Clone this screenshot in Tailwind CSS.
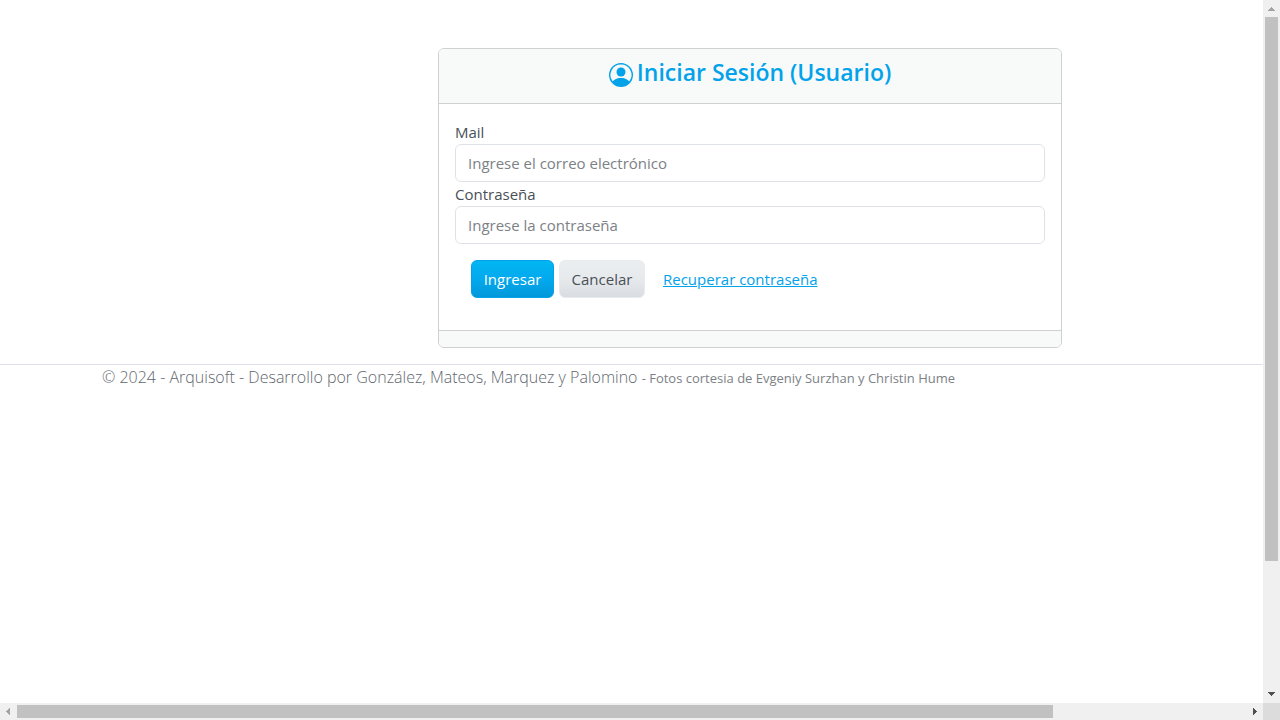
<!DOCTYPE html>
<html lang="es">
<head>
<meta charset="utf-8">
<meta name="viewport" content="width=device-width, initial-scale=1">
<title>Iniciar Sesión</title>
<script src="https://cdn.jsdelivr.net/npm/@tailwindcss/browser@4"></script>
</head>
<body class="grid h-screen grid-cols-[minmax(0,1fr)_17px] grid-rows-[minmax(0,1fr)_17px] overflow-hidden bg-white font-['Open_Sans','Noto_Sans',sans-serif] text-[15px] leading-6 text-[#495057]">
  <div class="overflow-hidden">
    <div class="w-[calc(100%+237px)] pt-12">
      <main class="mx-auto max-w-[624px] overflow-hidden rounded-md border border-[#cfd1d1]">
        <header class="flex h-[55px] items-start justify-center gap-1 border-b border-[#cfd1d1] bg-[#f8fafa] pt-2 text-[#03a2e9]">
          <svg class="mt-[6px] size-6" viewBox="0 0 16 16" fill="currentColor" aria-hidden="true">
            <path d="M11 6a3 3 0 1 1-6 0 3 3 0 0 1 6 0"/>
            <path fill-rule="evenodd" d="M0 8a8 8 0 1 1 16 0A8 8 0 0 1 0 8m8-7a7 7 0 0 0-5.468 11.37C3.242 11.226 4.805 10 8 10s4.757 1.225 5.468 2.37A7 7 0 0 0 8 1"/>
          </svg>
          <h1 class="text-[23px] leading-[30px] font-semibold">Iniciar Sesión (Usuario)</h1>
        </header>
        <form class="px-4 pt-4 pb-8" onsubmit="return false">
          <label for="mail" class="block">Mail</label>
          <input id="mail" type="email" placeholder="Ingrese el correo electrónico" class="block h-[38px] w-full rounded-md border border-[#dee2e6] bg-white px-3 placeholder:text-[#7c8186]">
          <label for="clave" class="block">Contraseña</label>
          <input id="clave" type="password" placeholder="Ingrese la contraseña" class="block h-[38px] w-full rounded-md border border-[#dee2e6] bg-white px-3 placeholder:text-[#7c8186]">
          <div class="flex items-center px-4 pt-4">
            <button type="submit" class="h-[38px] w-[83px] rounded-md border border-[#03a2e9] bg-linear-to-b from-[#02b6f2] via-[#03a9ee] to-[#0298da] text-white">Ingresar</button>
            <button type="button" class="ml-[5px] h-[38px] w-[86px] rounded-md border border-[#e9ecef] bg-linear-to-b from-[#ebeef1] via-[#e7eaed] to-[#d9dce0]">Cancelar</button>
            <a href="#" class="ml-[18px] text-[#03a2e9] underline">Recuperar contraseña</a>
          </div>
        </form>
        <div class="h-[17px] border-t border-[#cfd1d1] bg-[#f8fafa]"></div>
      </main>
      <footer class="mt-4 border-t border-[#dee2e6]">
        <p class="mx-auto max-w-[1296px] text-base font-light whitespace-nowrap text-[#5f676e]">© 2024 - Arquisoft - Desarrollo por González, Mateos, Marquez y Palomino <small class="text-[13px] font-normal text-[#7c8186]">- Fotos cortesia de Evgeniy Surzhan y Christin Hume</small></p>
      </footer>
    </div>
  </div>
  <div class="flex flex-col items-center bg-[#f0f0f0]" aria-hidden="true">
    <svg class="h-[17px] w-[17px] shrink-0" viewBox="0 0 17 17" fill="#a3a3a3" shape-rendering="crispEdges"><path d="M8 7h1v1h1v1h1v1h1v1H5v-1h1V9h1V8h1z"/></svg>
    <div class="h-[77.4%] w-[13px] bg-[#c1c1c1]"></div>
    <svg class="mt-auto h-[17px] w-[17px] shrink-0" viewBox="0 0 17 17" fill="#505050" shape-rendering="crispEdges"><path d="M5 6h7v1h-1v1h-1v1H9v1H8V9H7V8H6V7H5z"/></svg>
  </div>
  <div class="flex items-center bg-[#f0f0f0]" aria-hidden="true">
    <svg class="h-[17px] w-[17px] shrink-0" viewBox="0 0 17 17" fill="#a3a3a3" shape-rendering="crispEdges"><path d="M10 5v7H9v-1H8v-1H7V9H6V8h1V7h1V6h1V5z"/></svg>
    <div class="h-[13px] w-[82%] bg-[#c1c1c1]"></div>
    <svg class="ml-auto h-[17px] w-[17px] shrink-0" viewBox="0 0 17 17" fill="#505050" shape-rendering="crispEdges"><path d="M7 5h1v1h1v1h1v1h1v1h-1v1H9v1H8v1H7z"/></svg>
  </div>
  <div class="bg-[#dcdcdc]"></div>
</body>
</html>
